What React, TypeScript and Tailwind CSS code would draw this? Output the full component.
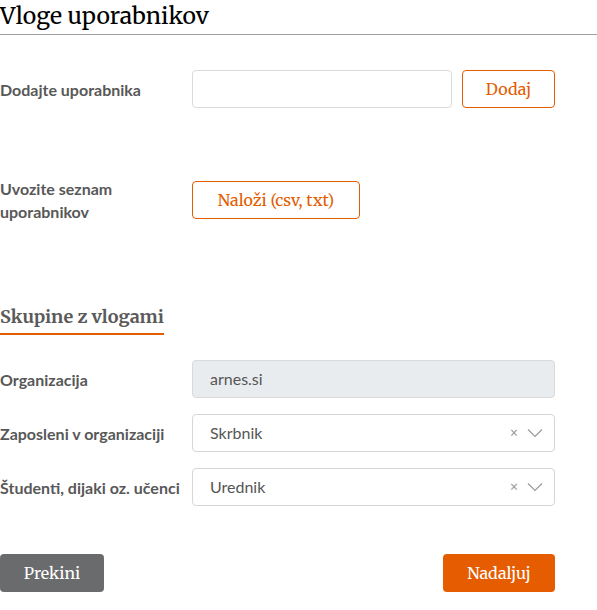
import React from 'react';

const serif = "font-['Merriweather','DejaVu_Serif',serif]";
const sans = "font-['Source_Sans_Pro','Lato','Liberation_Sans',sans-serif]";

const Chevron = () => (
  <svg width="16" height="10" viewBox="0 0 16 10" fill="none" stroke="#9a9a9a" strokeWidth="1.2">
    <path d="M1 1.5 L8 8.5 L15 1.5" />
  </svg>
);

const SelectBox = ({ value }: { value: string }) => (
  <div className="flex h-[38px] w-[363px] items-center justify-between rounded border border-[#d6d6d6] bg-white pl-[17px] pr-[11px]">
    <span className={`${sans} text-[16px] text-[#555]`}>{value}</span>
    <div className="flex items-center gap-[9px]">
      <span className="text-[14px] leading-none text-[#999]">×</span>
      <Chevron />
    </div>
  </div>
);

const Label = ({ children }: { children: React.ReactNode }) => (
  <div className={`${sans} w-[192px] text-[16px] font-bold leading-[23px] text-[#585858]`}>{children}</div>
);

export default function App() {
  return (
    <div className="w-[597px] bg-white">
      <div className="border-b border-[#a0a0a0] pb-[2px]">
        <h1 className={`${serif} text-[23px] leading-[32px] text-black`}>Vloge uporabnikov</h1>
      </div>

      <div className="w-[555px]">
        {/* dodaj */}
        <div className="mt-[35px] flex items-center">
          <Label>Dodajte uporabnika</Label>
          <input className="h-[38px] w-[260px] rounded border border-[#dadada] bg-white outline-none" />
          <button className={`${serif} ml-[10px] h-[38px] w-[93px] rounded border border-[#e35d00] text-[16px] text-[#e35d00]`}>
            Dodaj
          </button>
        </div>

        {/* uvoz */}
        <div className="mt-[69px] flex items-center">
          <Label>
            Uvozite seznam
            <br />
            uporabnikov
          </Label>
          <button className={`${serif} h-[38px] w-[168px] rounded border border-[#e35d00] text-[16px] text-[#e35d00]`}>
            Naloži (csv, txt)
          </button>
        </div>

        {/* skupine */}
        <div className="mt-[80px]">
          <h2 className={`${serif} inline-block border-b-2 border-[#e35d00] pb-[2px] text-[18px] font-bold leading-[28px] text-[#5a5a5a]`}>
            Skupine z vlogami
          </h2>
        </div>

        <div className="mt-[25px] flex items-center">
          <Label>Organizacija</Label>
          <div className={`${sans} flex h-[38px] w-[363px] items-center rounded border border-[#dadada] bg-[#e9ecef] pl-[17px] text-[16px] text-[#555]`}>
            arnes.si
          </div>
        </div>

        <div className="mt-[16px] flex items-center">
          <Label>Zaposleni v organizaciji</Label>
          <SelectBox value="Skrbnik" />
        </div>

        <div className="mt-[16px] flex items-center">
          <Label>Študenti, dijaki oz. učenci</Label>
          <SelectBox value="Urednik" />
        </div>

        <div className="mt-[48px] flex items-center justify-between">
          <button className={`${serif} h-[38px] w-[104px] rounded bg-[#6a6b6d] text-[16px] text-white`}>Prekini</button>
          <button className={`${serif} h-[38px] w-[112px] rounded bg-[#e65c00] text-[16px] text-white`}>Nadaljuj</button>
        </div>
      </div>
    </div>
  );
}
